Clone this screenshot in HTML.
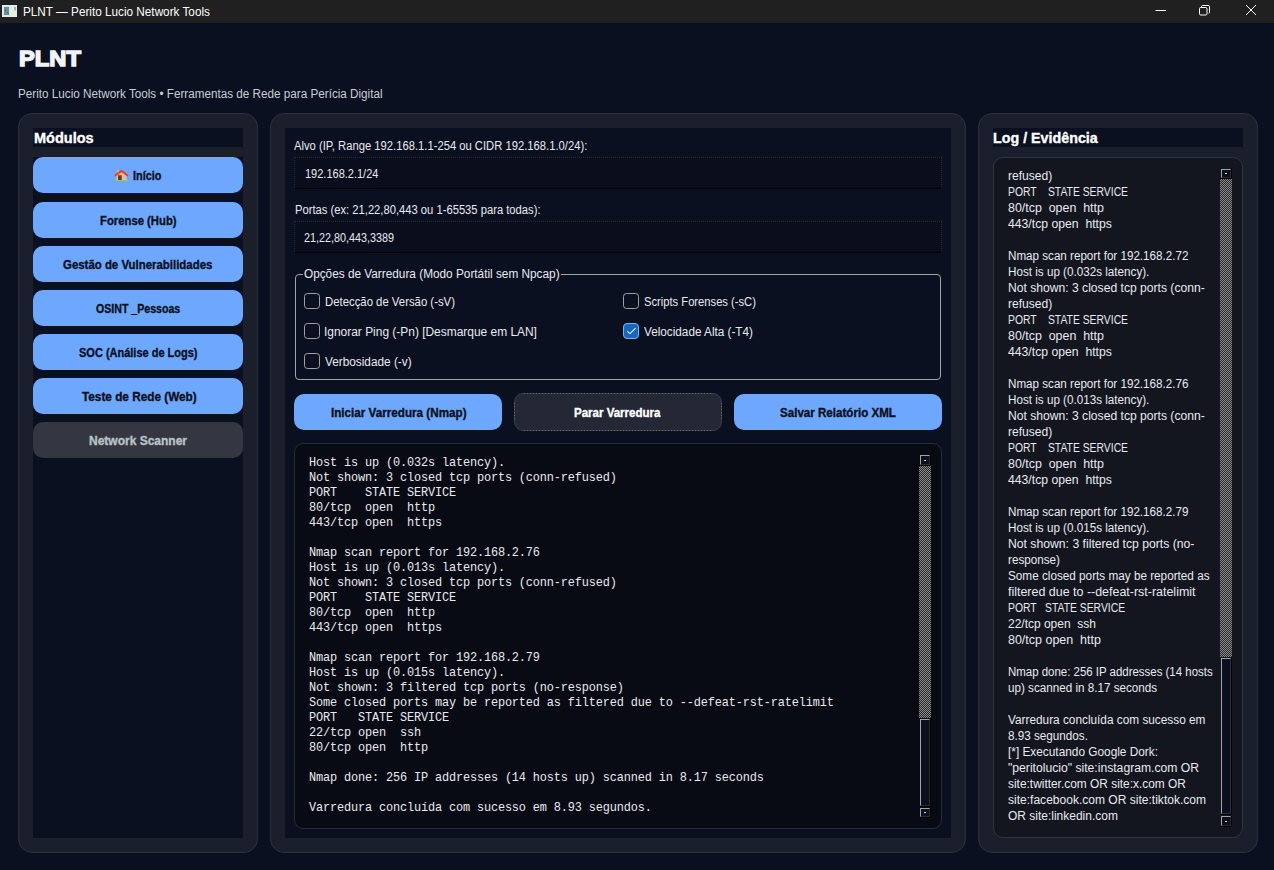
<!DOCTYPE html>
<html><head><meta charset="utf-8">
<style>
*{margin:0;padding:0;box-sizing:border-box}
html,body{width:1274px;height:870px;overflow:hidden;background:#0b1020;font-family:"Liberation Sans",sans-serif;color:#e8eaf0}
.a{position:absolute}
.t{white-space:pre;position:absolute;line-height:1}
.panel{position:absolute;background:#1b1f2b;border:1px solid #2d313d;border-radius:14px}
.inner{position:absolute;background:#0b1020}
.btn{position:absolute;width:210px;height:36.2px;left:33px;background:#6ea8fe;border-radius:10px}
.ent{position:absolute;left:294px;width:648px;height:32px;background:#0a0e1c;border-bottom:1px solid #000}
.cb{position:absolute;width:16px;height:16px;border:1px solid #a2a2a2;border-radius:3.5px}
.abtn{position:absolute;top:394px;width:208px;height:36px;border-radius:10px}
.sb{position:absolute;border:1px solid #9aa0a6}
.chk{background:repeating-conic-gradient(#8c8c8c 0 25%, #262626 0 50%) 0 0/2px 2px}
</style></head><body>
<div class="a" style="left:0;top:0;width:1274px;height:23px;background:#202020"></div>
<svg class="a" style="left:0;top:0" width="20" height="20" shape-rendering="crispEdges">
<rect x="2" y="4" width="15" height="1" fill="#1a1e2c"/>
<rect x="2" y="5" width="15" height="12" fill="#e6eaf2"/>
<rect x="3" y="5" width="10" height="1" fill="#dcf5df"/>
<rect x="3" y="6" width="7" height="10" fill="#d4ecd8"/>
<rect x="4" y="7" width="5" height="8" fill="#6a8ea0"/>
<rect x="5" y="10" width="1" height="1" fill="#2c4c8c"/>
<rect x="7" y="12" width="1" height="1" fill="#7c5c54"/>
<rect x="8" y="13" width="1" height="1" fill="#7c5c54"/>
<rect x="10" y="7" width="3" height="8" fill="#ecebd6"/>
<rect x="14" y="7" width="2" height="3" fill="#a9adba"/>
<rect x="14" y="10" width="2" height="1" fill="#a6f0a4"/>
</svg>
<svg class="a" style="left:1155px;top:4px" width="14" height="14"><path d="M0.5 6.5 H11" stroke="#ffffff" stroke-width="1"/></svg>
<svg class="a" style="left:1199px;top:4px" width="14" height="14"><rect x="0.5" y="3.5" width="7.5" height="7.5" rx="1.2" fill="none" stroke="#fff"/><path d="M2.5 3.5 V2.7 Q2.5 1.5 3.7 1.5 H9.2 Q10.5 1.5 10.5 2.8 V8.5 Q10.5 9.3 9.7 9.3" fill="none" stroke="#fff"/></svg>
<svg class="a" style="left:1245px;top:4px" width="14" height="14"><path d="M1 1 L11 11 M11 1 L1 11" stroke="#ffffff" stroke-width="1"/></svg>

<div class="panel" style="left:18px;top:113px;width:240px;height:740px"></div>
<div class="inner" style="left:33px;top:128px;width:210px;height:19px;background:#0b1020"></div>
<div class="inner" style="left:33px;top:157px;width:210px;height:681px"></div>
<div class="btn" style="top:157px;"></div>
<div class="btn" style="top:201.6px;"></div>
<div class="btn" style="top:245.6px;"></div>
<div class="btn" style="top:289.8px;"></div>
<div class="btn" style="top:333.9px;"></div>
<div class="btn" style="top:377.9px;"></div>
<div class="btn" style="top:422px;background:#343741"></div>
<svg class="a" style="left:114px;top:170px" width="15" height="12" viewBox="0 0 15 12">
<rect x="3" y="0" width="1.8" height="3" fill="#f6b060"/>
<path d="M2.5 6 L7.5 1.5 L12.5 6 V10 H2.5 Z" fill="#f6c27a"/>
<path d="M1 5.8 L7.5 0.9 L14 5.8" stroke="#f03a2e" stroke-width="2" fill="none"/>
<rect x="4" y="5.2" width="3.7" height="4.8" fill="#7a3518"/>
<rect x="8" y="5.2" width="3" height="3" fill="#8fd3f5"/>
<rect x="1.3" y="10" width="12.7" height="1" fill="#8cc08c"/>
</svg>

<div class="panel" style="left:270px;top:113px;width:696px;height:740px"></div>
<div class="inner" style="left:285px;top:128px;width:666px;height:710px"></div>
<div class="ent" style="top:157px;border-top:1px dotted #252936;border-left:1px dotted #252936;border-right:1px dotted #252936"></div>
<div class="ent" style="top:221px;border-top:1px dotted #252936;border-left:1px dotted #252936;border-right:1px dotted #252936"></div>
<div class="a" style="left:295px;top:274px;width:646px;height:106px;border:1px solid #a0a3aa;border-radius:4px"></div>
<div class="cb" style="left:304px;top:293px"></div>
<div class="cb" style="left:304px;top:323px"></div>
<div class="cb" style="left:304px;top:353px"></div>
<div class="cb" style="left:623px;top:293px"></div>
<div class="cb" style="left:623px;top:323px;background:#1666c2;border-color:#7fb6d8;border-radius:4px"><svg width="14" height="14" viewBox="0 0 14 14" style="position:absolute;left:0;top:0"><path d="M3.3 7.3 L6 9.6 L11.6 4.2" stroke="#f4f4f0" stroke-width="1.1" fill="none"/></svg></div>
<div class="abtn" style="left:294px;background:#6ea8fe"></div>
<div class="a" style="left:514px;top:393px;width:208px;height:38px;border-radius:9px;background:#242734;border:1px solid #3b3e49"></div>
<div class="a" style="left:524px;top:393px;width:188px;height:1px;background:repeating-linear-gradient(90deg,#6e6856 0 1px,transparent 1px 3px)"></div>
<div class="a" style="left:524px;top:430px;width:188px;height:1px;background:repeating-linear-gradient(90deg,#6e6856 0 1px,transparent 1px 3px)"></div>
<div class="a" style="left:514px;top:403px;width:1px;height:18px;background:repeating-linear-gradient(180deg,#6e6856 0 1px,transparent 1px 3px)"></div>
<div class="a" style="left:721px;top:403px;width:1px;height:18px;background:repeating-linear-gradient(180deg,#6e6856 0 1px,transparent 1px 3px)"></div>
<div class="abtn" style="left:734px;background:#6ea8fe"></div>

<div class="a" style="left:294px;top:443px;width:648px;height:386px;background:#080b14;border:1px solid #272b37;border-radius:9px"></div>
<div class="t" id="out" style="left:309px;top:456px;font-family:'Liberation Mono',monospace;font-size:11.9px;line-height:15px;letter-spacing:-0.14px;color:#e8eaf0">Host is up (0.032s latency).
Not shown: 3 closed tcp ports (conn-refused)
PORT    STATE SERVICE
80/tcp  open  http
443/tcp open  https
&nbsp;
Nmap scan report for 192.168.2.76
Host is up (0.013s latency).
Not shown: 3 closed tcp ports (conn-refused)
PORT    STATE SERVICE
80/tcp  open  http
443/tcp open  https
&nbsp;
Nmap scan report for 192.168.2.79
Host is up (0.015s latency).
Not shown: 3 filtered tcp ports (no-response)
Some closed ports may be reported as filtered due to --defeat-rst-ratelimit
PORT   STATE SERVICE
22/tcp open  ssh
80/tcp open  http
&nbsp;
Nmap done: 256 IP addresses (14 hosts up) scanned in 8.17 seconds
&nbsp;
Varredura concluída com sucesso em 8.93 segundos.</div>
<div class="a" style="left:919px;top:454px;width:12px;height:12px;border-top:1px solid #080b14;border-left:1px solid #080b14;border-right:1px solid #000;border-bottom:1px solid #000"><div class="a" style="left:0;top:0;right:0;bottom:0;background:#0b1020;border-top:1px solid #a3a3a3;border-left:1px solid #a3a3a3;border-right:1px solid #2e2c2a;border-bottom:1px solid #2e2c2a"></div><div class="a" style="left:3.5px;top:4.5px;width:2.6px;height:1.5px;background:#f0f0f0;border-radius:1px"></div></div><div class="a chk" style="left:919px;top:466px;width:12px;height:252px"></div><div class="a" style="left:919px;top:718px;width:12px;height:89px;border-top:1px solid #080b14;border-left:1px solid #080b14;border-right:1px solid #000;border-bottom:1px solid #000"><div class="a" style="left:0;top:0;right:0;bottom:0;background:#0b1020;border-top:1px solid #a3a3a3;border-left:1px solid #a3a3a3;border-right:1px solid #2e2c2a;border-bottom:1px solid #2e2c2a"></div></div><div class="a" style="left:919px;top:807px;width:12px;height:11px;border-top:1px solid #080b14;border-left:1px solid #080b14;border-right:1px solid #000;border-bottom:1px solid #000"><div class="a" style="left:0;top:0;right:0;bottom:0;background:#0b1020;border-top:1px solid #a3a3a3;border-left:1px solid #a3a3a3;border-right:1px solid #2e2c2a;border-bottom:1px solid #2e2c2a"></div><div class="a" style="left:3.5px;top:3.5px;width:2.6px;height:1.5px;background:#f0f0f0;border-radius:1px"></div></div>

<div class="panel" style="left:978px;top:113px;width:280px;height:740px"></div>
<div class="inner" style="left:993px;top:128px;width:250px;height:19px;background:#0b1020"></div>
<div class="a" style="left:993px;top:157px;width:250px;height:681px;background:#13161f;border:1px solid #30343f;border-radius:10px"></div>
<div class="t" id="log" style="left:1007.8px;top:168.0px;font-size:12.5px;color:#e8eaf0"><div style="transform:scaleX(0.9647)">refused)</div><div style="transform:scaleX(0.8295)">PORT    STATE SERVICE</div><div style="transform:scaleX(0.9930)">80/tcp  open  http</div><div style="transform:scaleX(0.9768)">443/tcp open  https</div><div style="transform:scaleX(0.9200)">&nbsp;</div><div style="transform:scaleX(0.9304)">Nmap scan report for 192.168.2.72</div><div style="transform:scaleX(0.9333)">Host is up (0.032s latency).</div><div style="transform:scaleX(0.9697)">Not shown: 3 closed tcp ports (conn-</div><div style="transform:scaleX(0.9647)">refused)</div><div style="transform:scaleX(0.8295)">PORT    STATE SERVICE</div><div style="transform:scaleX(0.9930)">80/tcp  open  http</div><div style="transform:scaleX(0.9768)">443/tcp open  https</div><div style="transform:scaleX(0.9200)">&nbsp;</div><div style="transform:scaleX(0.9304)">Nmap scan report for 192.168.2.76</div><div style="transform:scaleX(0.9333)">Host is up (0.013s latency).</div><div style="transform:scaleX(0.9697)">Not shown: 3 closed tcp ports (conn-</div><div style="transform:scaleX(0.9647)">refused)</div><div style="transform:scaleX(0.8295)">PORT    STATE SERVICE</div><div style="transform:scaleX(0.9930)">80/tcp  open  http</div><div style="transform:scaleX(0.9768)">443/tcp open  https</div><div style="transform:scaleX(0.9200)">&nbsp;</div><div style="transform:scaleX(0.9304)">Nmap scan report for 192.168.2.79</div><div style="transform:scaleX(0.9333)">Host is up (0.015s latency).</div><div style="transform:scaleX(0.9757)">Not shown: 3 filtered tcp ports (no-</div><div style="transform:scaleX(0.9348)">response)</div><div style="transform:scaleX(0.9388)">Some closed ports may be reported as</div><div style="transform:scaleX(0.9959)">filtered due to --defeat-rst-ratelimit</div><div style="transform:scaleX(0.8289)">PORT   STATE SERVICE</div><div style="transform:scaleX(0.9576)">22/tcp open  ssh</div><div style="transform:scaleX(0.9978)">80/tcp open  http</div><div style="transform:scaleX(0.9200)">&nbsp;</div><div style="transform:scaleX(0.9155)">Nmap done: 256 IP addresses (14 hosts</div><div style="transform:scaleX(0.9326)">up) scanned in 8.17 seconds</div><div style="transform:scaleX(0.9200)">&nbsp;</div><div style="transform:scaleX(0.9450)">Varredura concluída com sucesso em</div><div style="transform:scaleX(0.9344)">8.93 segundos.</div><div style="transform:scaleX(0.9468)">[*] Executando Google Dork:</div><div style="transform:scaleX(0.9724)">&quot;peritolucio&quot; site:instagram.com OR</div><div style="transform:scaleX(0.9524)">site:twitter.com OR site:x.com OR</div><div style="transform:scaleX(0.9630)">site:facebook.com OR site:tiktok.com</div><div style="transform:scaleX(0.9589)">OR site:linkedin.com</div></div>
<style>#log div{height:16px;line-height:16px;transform-origin:0 0}</style>
<div class="a" style="left:1220px;top:168px;width:12px;height:11px;border-top:1px solid #13161f;border-left:1px solid #13161f;border-right:1px solid #000;border-bottom:1px solid #000"><div class="a" style="left:0;top:0;right:0;bottom:0;background:#0b1020;border-top:1px solid #a3a3a3;border-left:1px solid #a3a3a3;border-right:1px solid #2e2c2a;border-bottom:1px solid #2e2c2a"></div><div class="a" style="left:3.5px;top:3.5px;width:2.6px;height:1.5px;background:#f0f0f0;border-radius:1px"></div></div><div class="a chk" style="left:1220px;top:179px;width:12px;height:478px"></div><div class="a" style="left:1220px;top:657px;width:12px;height:158px;border-top:1px solid #13161f;border-left:1px solid #13161f;border-right:1px solid #000;border-bottom:1px solid #000"><div class="a" style="left:0;top:0;right:0;bottom:0;background:#0b1020;border-top:1px solid #a3a3a3;border-left:1px solid #a3a3a3;border-right:1px solid #2e2c2a;border-bottom:1px solid #2e2c2a"></div></div><div class="a" style="left:1220px;top:815px;width:12px;height:12px;border-top:1px solid #13161f;border-left:1px solid #13161f;border-right:1px solid #000;border-bottom:1px solid #000"><div class="a" style="left:0;top:0;right:0;bottom:0;background:#0b1020;border-top:1px solid #a3a3a3;border-left:1px solid #a3a3a3;border-right:1px solid #2e2c2a;border-bottom:1px solid #2e2c2a"></div><div class="a" style="left:3.5px;top:4.5px;width:2.6px;height:1.5px;background:#f0f0f0;border-radius:1px"></div></div>

<div class="t" id="title" style="left:23.00px;top:6.00px;font-size:12.5px;font-weight:normal;color:#ffffff;transform:scaleX(0.9395);transform-origin:0 0;">PLNT — Perito Lucio Network Tools</div>
<div class="t" id="h1" style="left:19.00px;top:48.00px;font-size:21.8px;font-weight:bold;color:#f2f4fa;transform:scaleX(1.0871);transform-origin:0 0;-webkit-text-stroke:1.4px #f2f4fa;">PLNT</div>
<div class="t" id="sub" style="left:18.00px;top:88.00px;font-size:12.5px;font-weight:normal;color:#c9cdd6;transform:scaleX(0.9354);transform-origin:0 0;">Perito Lucio Network Tools • Ferramentas de Rede para Perícia Digital</div>
<div class="t" id="mod" style="left:34.10px;top:131.00px;font-size:14px;font-weight:bold;color:#ffffff;transform:scaleX(1.0360);transform-origin:0 0;-webkit-text-stroke:0.35px currentColor;">Módulos</div>
<div class="t" id="logh" style="left:993.40px;top:131.00px;font-size:14px;font-weight:bold;color:#ffffff;transform:scaleX(1.0200);transform-origin:0 0;-webkit-text-stroke:0.35px currentColor;">Log / Evidência</div>
<div class="t" id="bini" style="left:133.00px;top:170.00px;font-size:12.5px;font-weight:bold;color:#0b1020;transform:scaleX(0.8728);transform-origin:0 0;-webkit-text-stroke:0.35px currentColor;">Início</div>
<div class="t" id="bfor" style="left:100.00px;top:215.00px;font-size:12.5px;font-weight:bold;color:#0b1020;transform:scaleX(0.9040);transform-origin:0 0;-webkit-text-stroke:0.35px currentColor;">Forense (Hub)</div>
<div class="t" id="bges" style="left:63.00px;top:259.00px;font-size:12.5px;font-weight:bold;color:#0b1020;transform:scaleX(0.9137);transform-origin:0 0;-webkit-text-stroke:0.35px currentColor;">Gestão de Vulnerabilidades</div>
<div class="t" id="bosi" style="left:96.00px;top:303.00px;font-size:12.5px;font-weight:bold;color:#0b1020;transform:scaleX(0.8470);transform-origin:0 0;-webkit-text-stroke:0.35px currentColor;">OSINT _Pessoas</div>
<div class="t" id="bsoc" style="left:79.00px;top:347.00px;font-size:12.5px;font-weight:bold;color:#0b1020;transform:scaleX(0.8797);transform-origin:0 0;-webkit-text-stroke:0.35px currentColor;">SOC (Análise de Logs)</div>
<div class="t" id="btes" style="left:82.00px;top:391.00px;font-size:12.5px;font-weight:bold;color:#0b1020;transform:scaleX(0.9419);transform-origin:0 0;-webkit-text-stroke:0.35px currentColor;">Teste de Rede (Web)</div>
<div class="t" id="bnet" style="left:89.00px;top:435.00px;font-size:12.5px;font-weight:bold;color:#b9c3c6;transform:scaleX(0.9601);transform-origin:0 0;-webkit-text-stroke:0.35px currentColor;">Network Scanner</div>
<div class="t" id="alvo" style="left:294.00px;top:140.00px;font-size:12.5px;font-weight:normal;color:#e8eaf0;transform:scaleX(0.8985);transform-origin:0 0;">Alvo (IP, Range 192.168.1.1-254 ou CIDR 192.168.1.0/24):</div>
<div class="t" id="ent1" style="left:305.00px;top:168.00px;font-size:12.5px;font-weight:normal;color:#e8eaf0;transform:scaleX(0.8799);transform-origin:0 0;">192.168.2.1/24</div>
<div class="t" id="portas" style="left:295.00px;top:204.00px;font-size:12.5px;font-weight:normal;color:#e8eaf0;transform:scaleX(0.8967);transform-origin:0 0;">Portas (ex: 21,22,80,443 ou 1-65535 para todas):</div>
<div class="t" id="ent2" style="left:304.00px;top:232.00px;font-size:12.5px;font-weight:normal;color:#e8eaf0;transform:scaleX(0.8644);transform-origin:0 0;">21,22,80,443,3389</div>
<div class="t" id="lft" style="left:303.00px;top:268.00px;font-size:12.5px;font-weight:normal;color:#e8eaf0;transform:scaleX(0.9443);transform-origin:0 0;background:#0b1020;padding:0 1px;">Opções de Varredura (Modo Portátil sem Npcap)</div>
<div class="t" id="c1" style="left:325.00px;top:296.00px;font-size:12.5px;font-weight:normal;color:#e8eaf0;transform:scaleX(0.9079);transform-origin:0 0;">Detecção de Versão (-sV)</div>
<div class="t" id="c2" style="left:324.00px;top:326.00px;font-size:12.5px;font-weight:normal;color:#e8eaf0;transform:scaleX(0.9548);transform-origin:0 0;">Ignorar Ping (-Pn) [Desmarque em LAN]</div>
<div class="t" id="c3" style="left:325.00px;top:356.00px;font-size:12.5px;font-weight:normal;color:#e8eaf0;transform:scaleX(0.9444);transform-origin:0 0;">Verbosidade (-v)</div>
<div class="t" id="c4" style="left:644.00px;top:296.00px;font-size:12.5px;font-weight:normal;color:#e8eaf0;transform:scaleX(0.8952);transform-origin:0 0;">Scripts Forenses (-sC)</div>
<div class="t" id="c5" style="left:644.00px;top:326.00px;font-size:12.5px;font-weight:normal;color:#e8eaf0;transform:scaleX(0.9392);transform-origin:0 0;">Velocidade Alta (-T4)</div>
<div class="t" id="aini" style="left:330.50px;top:407.00px;font-size:12.2px;font-weight:bold;color:#0b1020;transform:scaleX(0.9573);transform-origin:0 0;-webkit-text-stroke:0.35px currentColor;">Iniciar Varredura (Nmap)</div>
<div class="t" id="apar" style="left:574.00px;top:407.00px;font-size:12.2px;font-weight:bold;color:#ffffff;transform:scaleX(0.9451);transform-origin:0 0;-webkit-text-stroke:0.35px currentColor;">Parar Varredura</div>
<div class="t" id="asal" style="left:780.00px;top:407.00px;font-size:12.2px;font-weight:bold;color:#0b1020;transform:scaleX(0.9506);transform-origin:0 0;-webkit-text-stroke:0.35px currentColor;">Salvar Relatório XML</div>
</body></html>
